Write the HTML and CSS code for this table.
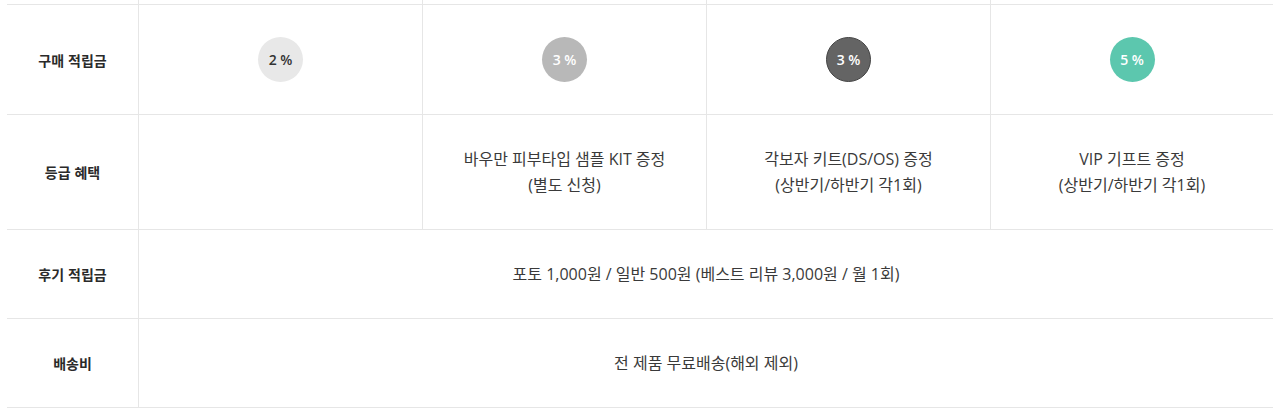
FILE: index.html
```html
<!DOCTYPE html>
<html lang="ko">
<head>
<meta charset="utf-8">
<link rel="stylesheet" href="styles.css">
</head>
<body>
<div class="grade-table">
  <div class="cell stub first"></div>
  <div class="cell stub"></div>
  <div class="cell stub"></div>
  <div class="cell stub"></div>
  <div class="cell stub"></div>

  <div class="cell label first">구매 적립금</div>
  <div class="cell"><span class="badge b-light">2 %</span></div>
  <div class="cell"><span class="badge b-silver">3 %</span></div>
  <div class="cell"><span class="badge b-dark">3 %</span></div>
  <div class="cell"><span class="badge b-vip">5 %</span></div>

  <div class="cell label first">등급 혜택</div>
  <div class="cell"></div>
  <div class="cell text">바우만 피부타입 샘플 KIT 증정<br>(별도 신청)</div>
  <div class="cell text">각보자 키트(DS/OS) 증정<br>(상반기/하반기 각1회)</div>
  <div class="cell text">VIP 기프트 증정<br>(상반기/하반기 각1회)</div>

  <div class="cell label first">후기 적립금</div>
  <div class="cell text span4">포토 1,000원 / 일반 500원 (베스트 리뷰 3,000원 / 월 1회)</div>

  <div class="cell label first">배송비</div>
  <div class="cell text span4">전 제품 무료배송(해외 제외)</div>
</div>
</body>
</html>
```
FILE: styles.css
```css
html, body {
  margin: 0;
  padding: 0;
  background: #ffffff;
}

body {
  font-family: "Noto Sans CJK KR", "Noto Sans", sans-serif;
  color: #333333;
}

.grade-table {
  margin-left: 7px;
  width: 1266px;
  display: grid;
  grid-template-columns: 131px 284px 284px 284px 283px;
  grid-template-rows: 5px 110px 115px 89px 89px;
}

.cell {
  border-bottom: 1px solid #e6e6e6;
  border-left: 1px solid #e6e6e6;
  display: flex;
  align-items: center;
  justify-content: center;
  text-align: center;
}

.cell.first {
  border-left: none;
}

.label {
  font-size: 14px;
  font-weight: 700;
  color: #2a2a2a;
}

.text {
  font-family: "Open Sans", "Noto Sans CJK KR", sans-serif;
  font-size: 16px;
  line-height: 26px;
  color: #3a3a3a;
}

.span4 {
  grid-column: span 4;
}

.badge {
  width: 45px;
  height: 45px;
  border-radius: 50%;
  display: flex;
  align-items: center;
  justify-content: center;
  box-sizing: border-box;
  font-family: "Open Sans", "Noto Sans", sans-serif;
  font-size: 14px;
  font-weight: 600;
  color: #ffffff;
}

.b-light {
  background: #e8e8e8;
  color: #333333;
}

.b-silver {
  background: #b8b8b8;
}

.b-dark {
  background: #646464;
  border: 1px solid #444444;
}

.b-vip {
  background: #5cc7ae;
}
```
